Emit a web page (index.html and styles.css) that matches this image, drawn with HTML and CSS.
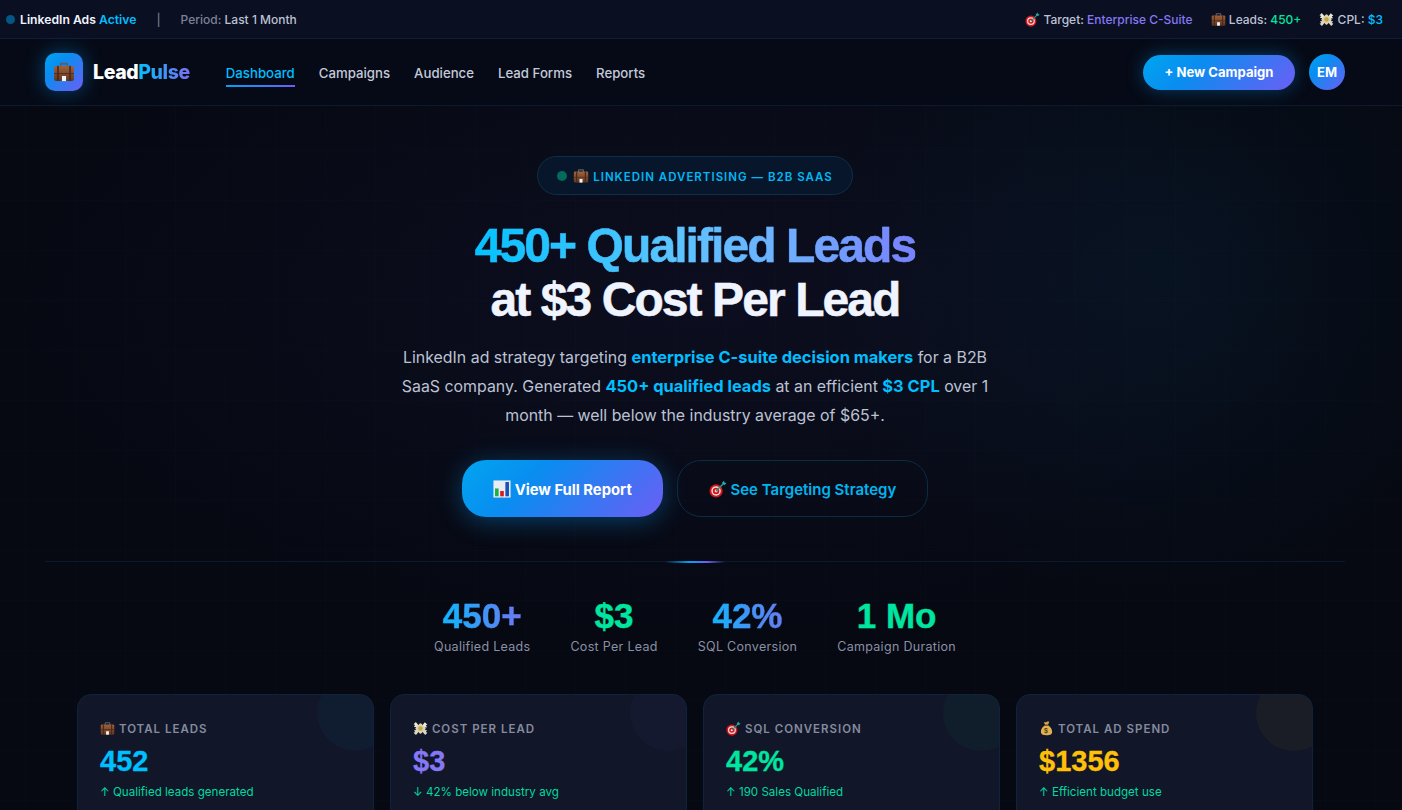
FILE: index.html
```html
<!DOCTYPE html>
<html lang="en">
<head>
    <meta charset="UTF-8">
    <meta name="viewport" content="width=device-width, initial-scale=1.0">
    <title>LeadPulse Dashboard</title>
    <link rel="stylesheet" href="styles.css">
</head>
<body>
    <svg class="sprites" width="0" height="0" aria-hidden="true">
        <defs>
            <linearGradient id="case-body" x1="0" y1="0" x2="0" y2="1">
                <stop offset="0" stop-color="#a0623c"/>
                <stop offset="1" stop-color="#5e3520"/>
            </linearGradient>
            <symbol id="i-case" viewBox="0 0 16 16">
                <path d="M5 4V2.300c0-.6.4-1 1-1h4c.6 0 1 .4 1 1V4H9.800V2.500H6.200V4z" fill="#5d5f66"/>
                <rect x=".8" y="3.600" width="14.400" height="11" rx="1.300" fill="url(#case-body)"/>
                <path d="M.8 8.900h14.400v.6H.8z" fill="#4a2a18"/>
                <rect x="3" y="3.600" width="1.200" height="11" fill="#4a2a18"/>
                <rect x="11.800" y="3.600" width="1.200" height="11" fill="#4a2a18"/>
                <rect x="6.500" y="10.900" width="3" height="3.700" fill="#f4f4f4"/>
            </symbol>
            <symbol id="i-target" viewBox="0 0 16 16">
                <circle cx="6.300" cy="9.700" r="5.900" fill="#d3141c"/>
                <circle cx="6.300" cy="9.700" r="4.200" fill="#f3dcd6"/>
                <circle cx="6.300" cy="9.700" r="2.900" fill="#d3141c"/>
                <circle cx="6.300" cy="9.700" r="1.300" fill="#f3dcd6"/>
                <path d="M6.300 9.700 13 3" stroke="#2b8f8c" stroke-width="1.300"/>
                <path d="M11.400 2.600 13.300.6l.5 1.600 1.800.5-2 1.900z" fill="#28a6a2"/>
            </symbol>
            <symbol id="i-money" viewBox="0 0 16 16">
                <path d="M7.500 6.500 3 1 .6 3.400l1.600.8L1 6.300l2.400.2L3 8.600z" fill="#ece8d8"/>
                <path d="M8.500 6.500 12.600 1.200 15.400 4l-1.800.6 1.400 2-2.500.2.300 2z" fill="#ece8d8"/>
                <path d="M7.500 9.500 3.200 15 .6 12.400l1.700-.6-1.300-2 2.400-.2-.3-2z" fill="#dcd7c2"/>
                <path d="M8.500 9.500 13 15l2.400-2.600-1.700-.6 1.300-2-2.400-.2.300-2z" fill="#dcd7c2"/>
                <rect x="3.800" y="3.800" width="8.400" height="8.400" rx="1" fill="#d8d3b4" transform="rotate(45 8 8)"/>
                <circle cx="8" cy="8" r="2.400" fill="#c8a53e"/>
            </symbol>
            <symbol id="i-chart" viewBox="0 0 16 16">
                <rect x=".4" y=".4" width="15.200" height="15.200" fill="#e9edf1"/>
                <rect x="1.800" y="7.500" width="3.200" height="7" fill="#18b04a"/>
                <rect x="6.400" y="9.800" width="3.200" height="4.700" fill="#d81a1a"/>
                <rect x="11" y="1.800" width="3.200" height="12.700" fill="#1c52b8"/>
            </symbol>
            <symbol id="i-bag" viewBox="0 0 16 16">
                <path d="M5 .8c1 .7 2 .7 3 .2s2-.5 3-.2L9.600 4H6.400z" fill="#d6a648"/>
                <path d="M6.200 4.800h3.600C12.500 6.400 14 9 14 11.400c0 2.500-1.800 3.800-6 3.800s-6-1.300-6-3.800C2 9 3.500 6.400 6.200 4.800z" fill="#e0b252"/>
                <rect x="5.900" y="3.900" width="4.200" height="1.100" fill="#7d5720"/>
                <text x="8" y="13" text-anchor="middle" class="bag-sign">$</text>
            </symbol>
        </defs>
    </svg>

    <div class="page">
        <div class="topbar">
            <div class="topbar-left">
                <span class="live-dot"></span>
                <span class="tb-strong">LinkedIn Ads <em class="c-blue">Active</em></span>
                <span class="tb-sep">|</span>
                <span class="tb-item"><span class="tb-muted">Period:</span> Last 1 Month</span>
            </div>
            <div class="topbar-right">
                <span class="tb-item"><svg class="ico"><use href="#i-target"/></svg> Target: <span class="c-purple">Enterprise C-Suite</span></span>
                <span class="tb-item"><svg class="ico"><use href="#i-case"/></svg> Leads: <span class="c-green">450+</span></span>
                <span class="tb-item"><svg class="ico"><use href="#i-money"/></svg> CPL: <span class="c-blue">$3</span></span>
            </div>
        </div>

        <nav class="navbar">
            <div class="nav-left">
                <div class="logo">
                    <span class="logo-box"><svg class="logo-ico"><use href="#i-case"/></svg></span>
                    <span class="logo-text">Lead<span class="grad-text">Pulse</span></span>
                </div>
                <div class="nav-links">
                    <a class="nav-link active">Dashboard</a>
                    <a class="nav-link">Campaigns</a>
                    <a class="nav-link">Audience</a>
                    <a class="nav-link">Lead Forms</a>
                    <a class="nav-link">Reports</a>
                </div>
            </div>
            <div class="nav-right">
                <button class="new-btn">+ New Campaign</button>
                <span class="avatar">EM</span>
            </div>
        </nav>

        <main class="main">
            <section class="hero">
                <div class="badge">
                    <span class="badge-dot"></span>
                    <svg class="badge-ico"><use href="#i-case"/></svg>
                    <span>LINKEDIN ADVERTISING — B2B SAAS</span>
                </div>
                <h1><span class="h1-grad">450+ Qualified Leads</span><br>at $3 Cost Per Lead</h1>
                <p class="hero-text">LinkedIn ad strategy targeting <strong>enterprise C-suite decision makers</strong> for a B2B SaaS company. Generated <strong>450+ qualified leads</strong> at an efficient <strong>$3 CPL</strong> over 1 month — well below the industry average of $65+.</p>
                <div class="hero-btns">
                    <button class="btn-main"><svg class="ico-lg"><use href="#i-chart"/></svg> View Full Report</button>
                    <button class="btn-ghost"><svg class="ico-lg"><use href="#i-target"/></svg> See Targeting Strategy</button>
                </div>
            </section>

            <div class="divider"><span class="divider-glow"></span></div>

            <div class="stats">
                <div class="stat"><div class="stat-num grad-text">450+</div><div class="stat-label">Qualified Leads</div></div>
                <div class="stat"><div class="stat-num c-green">$3</div><div class="stat-label">Cost Per Lead</div></div>
                <div class="stat"><div class="stat-num grad-text">42%</div><div class="stat-label">SQL Conversion</div></div>
                <div class="stat"><div class="stat-num c-green">1 Mo</div><div class="stat-label">Campaign Duration</div></div>
            </div>

            <div class="cards">
                <div class="card card-blue">
                    <div class="card-title"><svg class="ico"><use href="#i-case"/></svg> TOTAL LEADS</div>
                    <div class="card-value c-blue">452</div>
                    <div class="card-note">↑ Qualified leads generated</div>
                </div>
                <div class="card card-purple">
                    <div class="card-title"><svg class="ico"><use href="#i-money"/></svg> COST PER LEAD</div>
                    <div class="card-value c-purple">$3</div>
                    <div class="card-note">↓ 42% below industry avg</div>
                </div>
                <div class="card card-green">
                    <div class="card-title"><svg class="ico"><use href="#i-target"/></svg> SQL CONVERSION</div>
                    <div class="card-value c-green">42%</div>
                    <div class="card-note">↑ 190 Sales Qualified</div>
                </div>
                <div class="card card-gold">
                    <div class="card-title"><svg class="ico"><use href="#i-bag"/></svg> TOTAL AD SPEND</div>
                    <div class="card-value c-gold">$1356</div>
                    <div class="card-note">↑ Efficient budget use</div>
                </div>
            </div>
        </main>
    </div>
</body>
</html>
```

FILE: styles.css
```css
* {
    box-sizing: border-box;
    margin: 0;
    padding: 0;
}

html, body {
    height: 100%;
    overflow: hidden;
}

body {
    background: #060912;
    color: #f0f4ff;
    font-family: Inter, 'Noto Sans', sans-serif;
}

.sprites {
    display: block;
    height: 0;
}

.bag-sign {
    font: bold 7.500px 'Liberation Sans', sans-serif;
    fill: #5c3f12;
}

.page {
    height: 100vh;
    overflow: hidden;
    background-color: #060912;
    background-image:
        radial-gradient(circle 340px at 1160px 270px, rgba(0, 170, 255, 0.05), transparent),
        radial-gradient(ellipse 700px 340px at 50% 300px, rgba(108, 94, 245, 0.06), transparent),
        linear-gradient(rgba(0, 190, 255, 0.012) 1px, transparent 1px),
        linear-gradient(90deg, rgba(0, 190, 255, 0.012) 1px, transparent 1px);
    background-size: auto, auto, 50px 50px, 50px 50px;
    background-position: 0 0, 0 0, 0 0, 25px 0;
}

em {
    font-style: normal;
}

.c-blue { color: #00bfff; }
.c-purple { color: #8578f5; }
.c-green { color: #00e5a0; }
.c-gold { color: #ffc107; }

.ico {
    width: 15px;
    height: 15px;
    vertical-align: -3px;
}

.ico-lg {
    width: 18px;
    height: 18px;
    vertical-align: -3px;
}

/* top strip */
.topbar {
    height: 39px;
    padding: 0 19px 0 6px;
    display: flex;
    align-items: center;
    justify-content: space-between;
    background: #0b0f22;
    border-bottom: 1px solid #0e1e38;
    font-size: 12px;
    font-weight: 500;
    color: #bcc2d4;
}

.topbar-left, .topbar-right {
    display: flex;
    align-items: center;
}

.topbar-right {
    gap: 18px;
}

.live-dot {
    width: 9px;
    height: 9px;
    border-radius: 50%;
    background: #045684;
    margin-right: 5px;
}

.tb-strong {
    color: #f0f4ff;
    font-size: 12.200px;
    font-weight: 600;
}

.tb-strong em {
    font-weight: 600;
}

.tb-sep {
    margin: 0 20px;
    color: #747a8e;
}

.tb-muted {
    color: #7c8296;
}

/* nav */
.navbar {
    height: 67px;
    padding: 0 57px 0 45px;
    display: flex;
    align-items: center;
    justify-content: space-between;
    background: #060a16;
    border-bottom: 1px solid #0d1a2e;
}

.nav-left, .nav-right, .logo {
    display: flex;
    align-items: center;
}

.logo {
    gap: 10px;
    margin-right: 36px;
}

.logo-box {
    width: 38px;
    height: 38px;
    border-radius: 10px;
    display: flex;
    align-items: center;
    justify-content: center;
    background: linear-gradient(135deg, #00a5f0, #0a8cf0 35%, #6c5ef5);
    box-shadow: 0 0 20px rgba(0, 160, 255, 0.4);
}

.logo-ico {
    width: 22px;
    height: 22px;
}

.logo-text {
    font-size: 19.500px;
    font-weight: 800;
    letter-spacing: -0.4px;
    color: #fff;
}

.grad-text {
    background: linear-gradient(90deg, #00bfff, #7b6ff0);
    -webkit-background-clip: text;
    background-clip: text;
    color: transparent;
}

.nav-links {
    display: flex;
    gap: 24px;
}

.nav-link {
    padding: 8px 0 4px;
    font-size: 13.230px;
    font-weight: 500;
    color: #c3c9da;
    border-bottom: 2px solid transparent;
}

.nav-link.active {
    color: #00bfff;
    border-image: linear-gradient(90deg, #00a2f5, #6c5ef5) 1;
}

.nav-right {
    gap: 14px;
}

.new-btn {
    height: 35px;
    width: 152px;
    border: none;
    border-radius: 18px;
    background: linear-gradient(135deg, #00a5f0, #0a8cf0 35%, #6c5ef5);
    box-shadow: 0 0 18px rgba(0, 160, 255, 0.35);
    color: #fff;
    font: 700 13.100px Inter, sans-serif;
}

.avatar {
    width: 36px;
    height: 36px;
    border-radius: 50%;
    display: flex;
    align-items: center;
    justify-content: center;
    background: linear-gradient(135deg, #00a5f0, #0a8cf0 35%, #6c5ef5);
    color: #fff;
    font-size: 13px;
    font-weight: 700;
}

/* hero */
.main {
    margin-right: 12px;
}

.hero {
    padding-top: 50px;
    display: flex;
    flex-direction: column;
    align-items: center;
    text-align: center;
}

.badge {
    height: 39px;
    width: 316px;
    padding-top: 2px;
    display: flex;
    align-items: center;
    justify-content: center;
    border: 1px solid #0c3048;
    border-radius: 20px;
    background: #07162a;
    color: #00b8f5;
    font-size: 11.500px;
    font-weight: 600;
    letter-spacing: 1px;
}

.badge-dot {
    width: 10px;
    height: 10px;
    border-radius: 50%;
    background: #046a5c;
    margin: -2px 6px 0 0;
}

.badge-ico {
    width: 16px;
    height: 16px;
    margin: -2px 4px 0 0;
}

h1 {
    margin-top: 24px;
    font-family: 'Liberation Sans', Arial, sans-serif;
    font-size: 48px;
    font-weight: 700;
    line-height: 54px;
    letter-spacing: -1.920px;
    color: #f0f4ff;
    -webkit-text-stroke: 0.5px #f0f4ff;
}

.h1-grad {
    background: linear-gradient(90deg, #00c3ff 0%, #5cc4ff 45%, #6fb0ff 70%, #7b7fff 100%);
    -webkit-background-clip: text;
    background-clip: text;
    color: transparent;
    -webkit-text-stroke: 0.5px rgba(90, 190, 255, 0.45);
}

.hero-text {
    width: 600px;
    margin-top: 15.500px;
    font-size: 15.900px;
    line-height: 28.500px;
    color: #bcc2d4;
}

.hero-text strong {
    color: #00bfff;
    font-size: 16.450px;
    font-weight: 700;
}

.hero-btns {
    margin-top: 30.400px;
    display: flex;
    gap: 14px;
}

.btn-main, .btn-ghost {
    height: 57px;
    padding-top: 2px;
    border-radius: 24px;
}

.btn-main {
    width: 201px;
    border: none;
    background: linear-gradient(135deg, #00a5f0, #0a8cf0 35%, #6c5ef5);
    box-shadow: 0 4px 24px rgba(0, 160, 255, 0.35);
    color: #fff;
    font: 700 14.800px Inter, sans-serif;
}

.btn-ghost {
    width: 251px;
    border: 1px solid #0c2c44;
    background: transparent;
    color: #00b4ee;
    font: 600 15px Inter, sans-serif;
}

/* divider + stats */
.divider {
    position: relative;
    height: 1px;
    margin: 44px 45px 0;
    background: #0d1a2c;
}

.divider-glow {
    position: absolute;
    left: 50%;
    top: 0;
    width: 60px;
    height: 2px;
    margin-left: -30px;
    background: linear-gradient(90deg, transparent, #00a2f5 40%, #6c5ef5 70%, transparent);
}

.stats {
    margin-top: 33px;
    display: flex;
    justify-content: center;
    gap: 40px;
}

.stat {
    text-align: center;
}

.stat-num {
    font-family: 'Liberation Sans', Arial, sans-serif;
    font-size: 35px;
    font-weight: 700;
    line-height: 42px;
    -webkit-text-stroke: 0.4px currentColor;
}

.stat-num.grad-text {
    -webkit-text-stroke-color: rgba(70, 160, 250, 0.4);
}

.stat-label {
    margin-top: 2px;
    font-size: 12.500px;
    color: #8a90a6;
    letter-spacing: 0.3px;
}

/* cards */
.cards {
    margin-top: 40px;
    padding: 0 77px;
    display: grid;
    grid-template-columns: repeat(4, 1fr);
    gap: 16px;
}

.card {
    position: relative;
    height: 160px;
    padding: 26px 22px;
    overflow: hidden;
    border: 1px solid #10233c;
    border-radius: 14px;
    background: #111628;
}

.card::after {
    content: '';
    position: absolute;
    top: -20px;
    right: -20px;
    width: 76px;
    height: 76px;
    border-radius: 50%;
}

.card-blue::after { background: rgba(0, 191, 255, 0.04); }
.card-purple::after { background: rgba(123, 111, 240, 0.04); }
.card-green::after { background: rgba(0, 217, 160, 0.04); }
.card-gold::after { background: rgba(255, 193, 7, 0.04); }

.card-title {
    font-size: 11.500px;
    font-weight: 600;
    letter-spacing: 1px;
    color: #858b9f;
}

.card-value {
    margin-top: 7px;
    font-family: 'Liberation Sans', Arial, sans-serif;
    font-size: 29px;
    font-weight: 700;
    line-height: 36px;
    -webkit-text-stroke: 0.3px currentColor;
}

.card-note {
    margin-top: 6px;
    font-size: 11.600px;
    color: #00d9a0;
}
```
